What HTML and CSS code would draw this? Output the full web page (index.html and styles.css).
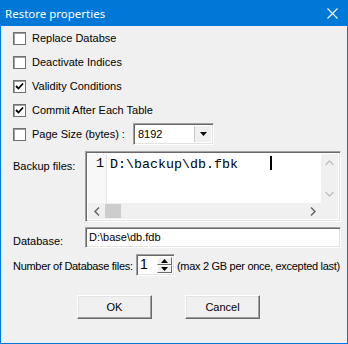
FILE: index.html
```html
<!DOCTYPE html>
<html lang="en">
<head>
    <meta charset="UTF-8">
    <title>Restore properties</title>
    <link rel="stylesheet" href="styles.css">
</head>
<body>
    <div class="window">
        <!-- title bar -->
        <div class="titlebar">
            <span class="title">Restore properties</span>
            <svg class="close" width="11" height="11" viewBox="0 0 11 11">
                <path d="M0.5 0.5L10.5 10.5M10.5 0.5L0.5 10.5" stroke="#fff" stroke-width="1.1" fill="none"/>
            </svg>
        </div>

        <div class="content">
            <div class="check-row"><span class="box"></span><span>Replace Databse</span></div>
            <div class="check-row"><span class="box"></span><span>Deactivate Indices</span></div>
            <div class="check-row"><span class="box checked"><svg width="9" height="9" viewBox="0 0 9 9"><path d="M1 4L3.5 6.5L8 1.5" stroke="#000" stroke-width="1.8" fill="none"/></svg></span><span>Validity Conditions</span></div>
            <div class="check-row"><span class="box checked"><svg width="9" height="9" viewBox="0 0 9 9"><path d="M1 4L3.5 6.5L8 1.5" stroke="#000" stroke-width="1.8" fill="none"/></svg></span><span>Commit After Each Table</span></div>
            <div class="check-row">
                <span class="box"></span>
                <span class="page-label">Page Size (bytes) :</span>
                <div class="combo sunken">
                    <span class="combo-value">8192</span>
                    <span class="combo-btn">
                        <svg width="7" height="4" viewBox="0 0 7 4"><path d="M0 0H7L3.5 4Z" fill="#000"/></svg>
                    </span>
                </div>
            </div>

            <!-- backup files memo -->
            <div class="backup-row">
                <span class="field-label">Backup files:</span>
                <div class="memo sunken">
                    <div class="memo-body">
                        <div class="gutter">1</div>
                        <div class="memo-text">D:\backup\db.fbk    <span class="caret"></span></div>
                    </div>
                    <div class="vscroll">
                        <svg width="9" height="6" viewBox="0 0 9 6"><path d="M0.5 5L4.5 1L8.5 5" stroke="#bfbfbf" stroke-width="1.3" fill="none"/></svg>
                        <svg width="9" height="6" viewBox="0 0 9 6"><path d="M0.5 1L4.5 5L8.5 1" stroke="#bfbfbf" stroke-width="1.3" fill="none"/></svg>
                    </div>
                    <div class="hscroll">
                        <span class="arrow">
                            <svg width="6" height="9" viewBox="0 0 6 9"><path d="M5 0.5L1 4.5L5 8.5" stroke="#606060" stroke-width="1.4" fill="none"/></svg>
                        </span>
                        <span class="thumb"></span>
                        <span class="track"></span>
                        <span class="arrow">
                            <svg width="6" height="9" viewBox="0 0 6 9"><path d="M1 0.5L5 4.5L1 8.5" stroke="#606060" stroke-width="1.4" fill="none"/></svg>
                        </span>
                    </div>
                    <div class="corner"></div>
                </div>
            </div>

            <div class="db-row">
                <span class="field-label db-label">Database:</span>
                <div class="edit sunken">D:\base\db.fdb</div>
            </div>

            <div class="num-row">
                <span class="num-label">Number of Database files:</span>
                <div class="spin sunken">
                    <span class="spin-value">1</span>
                    <span class="spin-btns">
                        <span class="spin-btn"><svg width="7" height="4" viewBox="0 0 7 4"><path d="M0 4H7L3.5 0Z" fill="#000"/></svg></span>
                        <span class="spin-btn"><svg width="7" height="4" viewBox="0 0 7 4"><path d="M0 0H7L3.5 4Z" fill="#000"/></svg></span>
                    </span>
                </div>
                <span class="num-hint">(max 2 GB per once, excepted last)</span>
            </div>

            <div class="buttons">
                <button class="btn">OK</button>
                <button class="btn">Cancel</button>
            </div>
        </div>
    </div>
</body>
</html>
```

FILE: styles.css
```css
* {
    margin: 0;
    padding: 0;
    box-sizing: border-box;
}

body {
    font-family: 'Liberation Sans', Arial, sans-serif;
    font-size: 11px;
    color: #000;
    background: #fff;
}

.window {
    width: 348px;
    height: 344px;
    background: #f0f0f0;
    border: 1px solid #0078d7;
    border-top: none;
    display: flex;
    flex-direction: column;
}

.titlebar {
    height: 26px;
    margin: 0 -1px;
    background: #0078d7;
    display: flex;
    align-items: center;
    justify-content: space-between;
    padding: 0 10px 0 5px;
}

.title {
    color: #fff;
    font-family: 'Noto Sans', sans-serif;
    font-size: 11.5px;
}

.close {
    margin-top: 1px;
}

.content {
    padding: 0 4px 0 12px;
}

/* checkboxes */
.check-row {
    height: 24px;
    display: flex;
    align-items: center;
    gap: 6px;
}

.box {
    width: 13px;
    height: 13px;
    background: #fff;
    border: 1px solid #707070;
    box-shadow: inset 1px 1px #a0a0a0;
    display: flex;
    align-items: center;
    justify-content: center;
}

.page-label {
    width: 95px;
}

/* 3d borders */
.sunken {
    border-top: 1px solid #a0a0a0;
    border-left: 1px solid #a0a0a0;
    border-right: 1px solid #fff;
    border-bottom: 1px solid #fff;
    box-shadow: inset 1px 1px #696969, inset -1px -1px #e3e3e3;
}

.combo {
    width: 81px;
    height: 22px;
    background: #fff;
    display: flex;
    padding: 2px;
}

.combo-value {
    flex: 1;
    padding: 2px 0 0 2px;
}

.combo-btn {
    width: 17px;
    background: #f0f0f0;
    border-left: 1px solid #c8c8c8;
    display: flex;
    align-items: center;
    justify-content: center;
}

/* memo */
.backup-row {
    margin-top: 5px;
    display: flex;
}

.field-label {
    width: 72px;
    flex-shrink: 0;
    padding-top: 9px;
}

.memo {
    width: 256px;
    height: 71px;
    padding: 2px;
    display: grid;
    grid-template-columns: 1fr 17px;
    grid-template-rows: 1fr 16px;
    background: #fff;
}

.memo-body {
    display: flex;
    background: #fff;
}

.gutter {
    width: 19px;
    background: #f8f8f8;
    border-right: 1px solid #e4e4e4;
    font-family: 'Liberation Mono', 'Courier New', monospace;
    font-size: 13.33px;
    text-align: right;
    padding: 2px 2px 0 0;
}

.memo-text {
    padding: 2px 0 0 3px;
    font-family: 'Liberation Mono', 'Courier New', monospace;
    font-size: 13.33px;
    white-space: pre;
}

.caret {
    display: inline-block;
    width: 2px;
    height: 14px;
    background: #000;
    vertical-align: -2px;
}

.vscroll {
    background: #f0f0f0;
    display: flex;
    flex-direction: column;
    justify-content: space-between;
    align-items: center;
    padding: 6px 0 6px;
}

.hscroll {
    background: #f0f0f0;
    display: flex;
    align-items: stretch;
}

.hscroll .arrow {
    width: 17px;
    display: flex;
    align-items: center;
    justify-content: center;
}

.hscroll .thumb {
    width: 16px;
    background: #cdcdcd;
    margin: 1px 0;
}

.hscroll .track {
    flex: 1;
}

.corner {
    background: #f0f0f0;
}

/* database */
.db-row {
    margin-top: 5px;
    display: flex;
}

.db-label {
    padding-top: 8px;
}

.edit {
    width: 256px;
    height: 21px;
    background: #fff;
    padding: 3px 0 0 3px;
}

/* number of files */
.num-row {
    margin-top: 6px;
    height: 22px;
    display: flex;
    align-items: center;
    white-space: nowrap;
    letter-spacing: -0.3px;
}

.num-label {
    width: 123px;
    flex-shrink: 0;
    padding-top: 2px;
}

.spin {
    width: 39px;
    height: 22px;
    flex-shrink: 0;
    background: #fff;
    display: flex;
    padding: 2px;
}

.spin-value {
    flex: 1;
    font-size: 14px;
    padding-left: 1px;
    line-height: 15px;
}

.spin-btns {
    width: 15px;
    display: flex;
    flex-direction: column;
}

.spin-btn {
    flex: 1;
    background: #f0f0f0;
    border-top: 1px solid #fff;
    border-left: 1px solid #fff;
    border-right: 1px solid #696969;
    border-bottom: 1px solid #696969;
    display: flex;
    align-items: center;
    justify-content: center;
}

.num-hint {
    margin-left: 2px;
    padding-top: 2px;
}

/* buttons */
.buttons {
    margin-top: 19px;
    padding-left: 64px;
    display: flex;
    gap: 33px;
}

.btn {
    width: 75px;
    height: 24px;
    font-family: 'Liberation Sans', Arial, sans-serif;
    font-size: 11px;
    color: #000;
    background: #f0f0f0;
    border-top: 1px solid #fff;
    border-left: 1px solid #fff;
    border-right: 1px solid #696969;
    border-bottom: 1px solid #696969;
    box-shadow: inset -1px -1px #a0a0a0, inset 1px 1px #e3e3e3;
}
```
